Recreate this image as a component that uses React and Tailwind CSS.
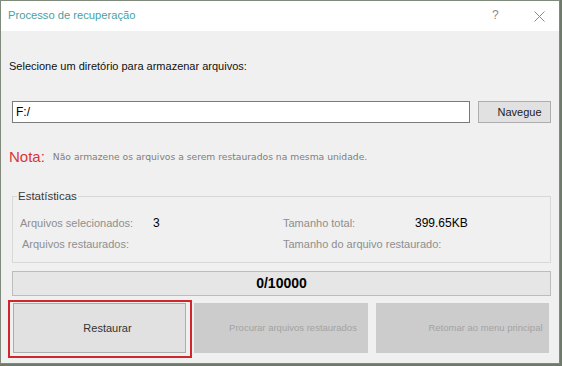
import React from "react";

export default function App() {
  const sans = { fontFamily: '"Liberation Sans", Arial, sans-serif' };
  return (
    <div className="w-[562px] h-[366px] bg-[#6f7a6c] overflow-hidden" style={sans}>
      <div className="w-[560px] h-[364px] border border-[#7f8a7d] bg-[#f0f0f0] flex flex-col">
        {/* Title bar */}
        <div className="h-[30px] bg-white flex items-center relative shrink-0">
          <span className="ml-[7px] text-[11.2px] text-[#4aa19f] leading-none">Processo de recuperação</span>
          <span className="absolute left-[491px] top-[8px] text-[12px] text-[#8a8a8a] leading-none">?</span>
          <svg className="absolute left-[533px] top-[10px]" width="11" height="11" viewBox="0 0 11 11">
            <path d="M0.5 0.5 L10.5 10.5 M10.5 0.5 L0.5 10.5" stroke="#8a8a8a" strokeWidth="1" fill="none" />
          </svg>
        </div>
        {/* Content */}
        <div className="flex flex-col pl-[11px] pr-[8px]">
          <div className="pt-[28px] -ml-[3px] text-[11px] leading-[14px] text-[#111]">
            Selecione um diretório para armazenar arquivos:
          </div>
          <div className="mt-[28px] flex gap-[8px] h-[22px]">
            <div className="flex-1 bg-white border border-[#7a7a7a] flex items-center pl-[3px] text-[12px] text-black">
              F:/
            </div>
            <button className="w-[73px] bg-[#e1e1e1] border border-[#adadad] text-[11px] text-[#222] pl-[10px]">
              Navegue
            </button>
          </div>
          <div className="mt-[23px] h-[20px] flex items-center -ml-[3px]">
            <span className="text-[15px] text-[#d7363a] leading-none">Nota:</span>
            <span
              className="ml-[8px] text-[9.2px] text-[#7e7e7e] leading-none mt-[1px] whitespace-nowrap"
              style={{ fontFamily: '"DejaVu Sans", Verdana, sans-serif' }}
            >
              Não armazene os arquivos a serem restaurados na mesma unidade.
            </span>
          </div>
          <fieldset className="mt-[23px] border border-[#d8d8d8] pb-[11px]">
            <legend className="ml-[4px] px-[1px] text-[11.5px] leading-[14px] text-[#3a3a3a]">Estatísticas</legend>
            <div className="grid grid-cols-[133px_130px_132px_1fr] pl-[7px] pt-[13px] gap-y-[7px] text-[11px] leading-[14px] text-[#8e8e8e]">
              <span>Arquivos selecionados:</span>
              <span className="text-[12px] text-black">3</span>
              <span>Tamanho total:</span>
              <span className="text-[12px] text-black">399.65KB</span>
              <span className="ml-[2px] col-span-2">Arquivos restaurados:</span>
              <span className="col-span-2">Tamanho do arquivo restaurado:</span>
            </div>
          </fieldset>
          <div className="mt-[8px] h-[25px] bg-[#e6e6e6] border border-[#bcbcbc] flex items-center justify-center text-[14px] font-bold text-black">
            0/10000
          </div>
          <div className="mt-[7px] flex gap-[8px] h-[50px] ml-[1px]">
            <div className="relative w-[173px]">
              <button className="w-full h-full bg-[#e1e1e1] border border-[#adadad] text-[11px] text-[#333] pl-[16px]">
                Restaurar
              </button>
              <div className="absolute -left-[5px] -top-[3px] -right-[6px] -bottom-[5px] border-2 border-[#d0272d] pointer-events-none" />
            </div>
            <button className="w-[174px] bg-[#cccccc] text-[9.5px] text-[#a3a3a3] pl-[24px] whitespace-nowrap">
              Procurar arquivos restaurados
            </button>
            <button className="w-[173px] bg-[#cccccc] text-[9.5px] text-[#a3a3a3] pl-[46px] whitespace-nowrap">
              Retomar ao menu principal
            </button>
          </div>
        </div>
      </div>
    </div>
  );
}
